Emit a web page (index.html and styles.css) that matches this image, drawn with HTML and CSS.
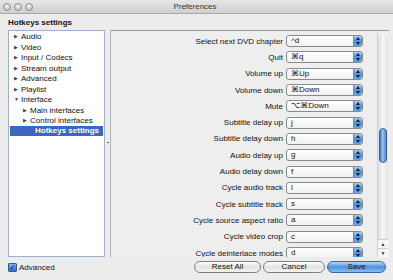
FILE: index.html
```html
<!DOCTYPE html>
<html lang="en">

<head>
  <meta charset="UTF-8">
  <title>Preferences</title>
  <link rel="stylesheet" href="styles.css">
</head>

<body>
  <div class="window">
    <!-- Title bar -->
    <div class="titlebar">
      <div class="lights">
        <span class="light"></span>
        <span class="light"></span>
        <span class="light"></span>
      </div>
      <div class="title">Preferences</div>
    </div>

    <div class="section-title">Hotkeys settings</div>

    <div class="main">
      <!-- Category tree -->
      <ul class="tree">
        <li><span class="arrow">&#9654;</span>Audio</li>
        <li><span class="arrow">&#9654;</span>Video</li>
        <li><span class="arrow">&#9654;</span>Input / Codecs</li>
        <li><span class="arrow">&#9654;</span>Stream output</li>
        <li><span class="arrow">&#9654;</span>Advanced</li>
        <li><span class="arrow">&#9654;</span>Playlist</li>
        <li><span class="arrow open">&#9660;</span>Interface</li>
        <li class="sub"><span class="arrow">&#9654;</span>Main interfaces</li>
        <li class="sub"><span class="arrow">&#9654;</span>Control interfaces</li>
        <li class="sub2 selected">Hotkeys settings</li>
      </ul>

      <div class="splitter"></div>

      <!-- Hotkeys pane -->
      <div class="pane">
        <div class="rows">
          <div class="row"><span class="label">Select next DVD chapter</span><span class="popup"><span class="val">^d</span><span class="cap"></span></span></div>
          <div class="row"><span class="label">Quit</span><span class="popup"><span class="val">&#8984;q</span><span class="cap"></span></span></div>
          <div class="row"><span class="label">Volume up</span><span class="popup"><span class="val">&#8984;Up</span><span class="cap"></span></span></div>
          <div class="row"><span class="label">Volume down</span><span class="popup"><span class="val">&#8984;Down</span><span class="cap"></span></span></div>
          <div class="row"><span class="label">Mute</span><span class="popup"><span class="val">&#8997;&#8984;Down</span><span class="cap"></span></span></div>
          <div class="row"><span class="label">Subtitle delay up</span><span class="popup"><span class="val">j</span><span class="cap"></span></span></div>
          <div class="row"><span class="label">Subtitle delay down</span><span class="popup"><span class="val">h</span><span class="cap"></span></span></div>
          <div class="row"><span class="label">Audio delay up</span><span class="popup"><span class="val">g</span><span class="cap"></span></span></div>
          <div class="row"><span class="label">Audio delay down</span><span class="popup"><span class="val">f</span><span class="cap"></span></span></div>
          <div class="row"><span class="label">Cycle audio track</span><span class="popup"><span class="val">l</span><span class="cap"></span></span></div>
          <div class="row"><span class="label">Cycle subtitle track</span><span class="popup"><span class="val">s</span><span class="cap"></span></span></div>
          <div class="row"><span class="label">Cycle source aspect ratio</span><span class="popup"><span class="val">a</span><span class="cap"></span></span></div>
          <div class="row"><span class="label">Cycle video crop</span><span class="popup"><span class="val">c</span><span class="cap"></span></span></div>
          <div class="row"><span class="label">Cycle deinterlace modes</span><span class="popup"><span class="val">d</span><span class="cap"></span></span></div>
        </div>

        <!-- Scroll bar -->
        <div class="scrollbar">
          <div class="track">
            <div class="thumb"></div>
          </div>
          <div class="sb-arrow">&#9650;</div>
          <div class="sb-arrow">&#9660;</div>
        </div>
      </div>
    </div>

    <!-- Bottom bar -->
    <div class="footer">
      <label class="check"><span class="box">&#10003;</span>Advanced</label>
      <div class="buttons">
        <span class="btn reset">Reset All</span>
        <span class="btn cancel">Cancel</span>
        <span class="btn save">Save</span>
      </div>
    </div>
  </div>
</body>

</html>
```

FILE: styles.css
```css
/* Page and window */
html, body {
  margin: 0;
  padding: 0;
}

body {
  width: 393px;
  height: 280px;
  overflow: hidden;
  background: #ececec;
  font-family: "Liberation Sans", "DejaVu Sans", sans-serif;
  font-size: 8px;
  color: #111;
}

.window {
  display: flex;
  flex-direction: column;
  height: 280px;
}

/* Title bar */
.titlebar {
  height: 14px;
  display: flex;
  align-items: center;
  background: linear-gradient(#e6e6e6, #cfcfcf);
  border-bottom: 1px solid #a8a8a8;
  box-sizing: border-box;
  position: relative;
}

.lights {
  display: flex;
  gap: 3px;
  padding-left: 3px;
}

.light {
  width: 8px;
  height: 8px;
  border-radius: 50%;
  background: radial-gradient(circle at 50% 35%, #f4f4f4, #b9b9b9);
  border: 1px solid #8e8e8e;
  box-sizing: border-box;
}

.title {
  flex: 1;
  text-align: center;
  font-size: 8px;
  color: #333;
  padding-right: 36px;
}

/* Section header */
.section-title {
  font-weight: bold;
  font-size: 8px;
  padding: 4px 0 0 8px;
  height: 12px;
}

/* Main area */
.main {
  display: flex;
  height: 227px;
  padding-left: 8px;
}

.tree {
  list-style: none;
  margin: 0;
  padding: 0 0 0 1px;
  width: 97px;
  background: #fff;
  border: 1px solid #9fb0c6;
  box-sizing: border-box;
  padding-top: 0;
}

.tree li {
  height: 10.5px;
  line-height: 10.5px;
  padding-left: 4px;
  white-space: nowrap;
}

.tree li.sub {
  padding-left: 13px;
}

.tree li.sub2 {
  padding-left: 25px;
}

.tree li.selected {
  background: #3c66c4;
  color: #fff;
  font-weight: bold;
  margin-right: 1px;
}

.arrow {
  display: inline-block;
  width: 7px;
  font-size: 5px;
  color: #444;
  vertical-align: 1px;
}

.arrow.open {
  font-size: 5px;
}

.splitter {
  width: 5px;
  position: relative;
}

.splitter::after {
  content: "";
  position: absolute;
  left: 2px;
  top: 112px;
  width: 2px;
  height: 1px;
  background: #666;
}

/* Hotkeys pane */
.pane {
  width: 279px;
  display: flex;
  background: #eeeeee;
  border-top: 1px solid #9a9a9a;
  border-left: 1px solid #b4b4b4;
  box-sizing: border-box;
  overflow: hidden;
}

.rows {
  width: 266px;
  padding-top: 2px;
}

.row {
  display: flex;
  align-items: center;
  height: 16.3px;
}

.label {
  width: 172px;
  text-align: right;
  white-space: nowrap;
  padding-right: 3px;
}

.popup {
  display: flex;
  width: 77px;
  height: 12px;
  box-sizing: border-box;
  border: 1px solid #8a8a8a;
  border-radius: 3px;
  background: linear-gradient(#ffffff, #f1f1f1);
  overflow: hidden;
}

.val {
  flex: 1;
  padding-left: 4px;
  line-height: 10px;
  white-space: nowrap;
}

.cap {
  width: 8px;
  background: linear-gradient(#a9cdf4, #4d8fdc 50%, #6aa5ea);
  border-left: 1px solid #6f8fb8;
  position: relative;
}

.cap::before,
.cap::after {
  content: "";
  position: absolute;
  left: 2px;
  border-left: 2px solid transparent;
  border-right: 2px solid transparent;
}

.cap::before {
  top: 1px;
  border-bottom: 3px solid #123;
}

.cap::after {
  bottom: 1px;
  border-top: 3px solid #123;
}

/* Scroll bar */
.scrollbar {
  width: 11px;
  display: flex;
  flex-direction: column;
  background: #f4f4f4;
  border-left: 1px solid #cfcfcf;
  box-sizing: border-box;
  margin-top: 2px;
}

.track {
  flex: 1;
  padding-top: 95px;
  background: linear-gradient(90deg, #dedede, #f7f7f7 50%, #e3e3e3);
  border-radius: 5px 5px 0 0;
}

.thumb {
  margin-left: 1px;
  width: 8px;
  height: 35px;
  border-radius: 4px;
  background: linear-gradient(90deg, #3f77c9, #9cc6f3 45%, #4a86d6);
  border: 1px solid #36609c;
  box-sizing: border-box;
}

.sb-arrow {
  height: 8px;
  font-size: 5px;
  line-height: 8px;
  text-align: center;
  color: #333;
  background: #f7f7f7;
  border-top: 1px solid #cfcfcf;
}

/* Footer */
.footer {
  display: flex;
  align-items: center;
  padding: 4px 7px 0 8px;
}

.check {
  display: flex;
  align-items: center;
  gap: 2px;
  flex: 1;
}

.box {
  width: 9px;
  height: 9px;
  background: linear-gradient(#7fb2ec, #2f6fcf);
  border: 1px solid #365d93;
  border-radius: 1px;
  box-sizing: border-box;
  color: #0a1a33;
  font-size: 8px;
  line-height: 7px;
  text-align: center;
  font-weight: bold;
}

.buttons {
  display: flex;
  gap: 2px;
}

.btn {
  height: 12px;
  line-height: 10px;
  box-sizing: border-box;
  border: 1px solid #7f7f7f;
  border-radius: 6px;
  background: linear-gradient(#ffffff, #e2e2e2 50%, #f4f4f4);
  text-align: center;
}

.reset {
  width: 67px;
}

.cancel {
  width: 62px;
}

.save {
  width: 59px;
  background: linear-gradient(#b7d8f8, #4f91de 50%, #86bdf2);
  border-color: #3d63a0;
}
```
